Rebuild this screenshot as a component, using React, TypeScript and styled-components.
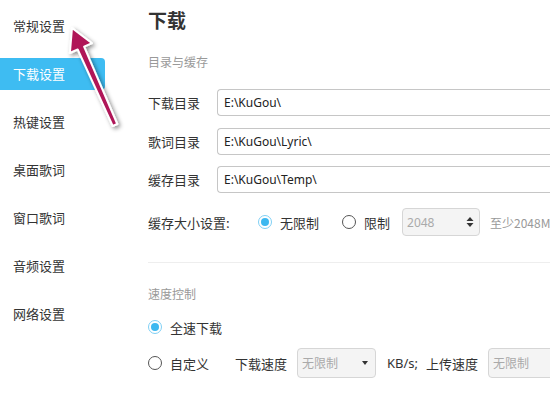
import React from 'react';
import styled, {createGlobalStyle} from 'styled-components';

const GlobalStyle = createGlobalStyle`
  html, body {
    margin: 0;
    padding: 0;
    background: #fff;
  }
  body {
    font-family: "Noto Sans CJK SC", "Noto Sans", sans-serif;
    color: #333;
  }
`;

const menu = ['常规设置', '下载设置', '热键设置', '桌面歌词', '窗口歌词', '音频设置', '网络设置'];

const dirs = [
  ['下载目录', 'E:\\KuGou\\'],
  ['歌词目录', 'E:\\KuGou\\Lyric\\'],
  ['缓存目录', 'E:\\KuGou\\Temp\\'],
];

export default function App() {
  return (
    <Page>
      <GlobalStyle />
      <Sidebar>
        {menu.map((m, i) => (
          <MenuItem key={m} active={i === 1}>
            {m}
          </MenuItem>
        ))}
      </Sidebar>
      <Main>
        <Title>下载</Title>
        <Section>目录与缓存</Section>
        <DirList>
          {dirs.map(([label, path]) => (
            <DirRow key={label}>
              <DirLabel>{label}</DirLabel>
              <PathInput>{path}</PathInput>
            </DirRow>
          ))}
        </DirList>
        <CacheRow>
          <CacheLabel>缓存大小设置:</CacheLabel>
          <Radio checked />
          <OptText>无限制</OptText>
          <Radio style={{marginLeft: 23}} />
          <OptText>限制</OptText>
          <SpinBox>
            2048
            <SpinArrows>
              <svg width="8" height="12" viewBox="0 0 8 12">
                <path d="M4 1 L7.5 5 L0.5 5 Z" fill="#333" />
                <path d="M4 11 L7.5 7 L0.5 7 Z" fill="#333" />
              </svg>
            </SpinArrows>
          </SpinBox>
          <Hint>至少2048M</Hint>
        </CacheRow>
        <Divider />
        <Section2>速度控制</Section2>
        <RadioRow>
          <Radio checked />
          <OptText>全速下载</OptText>
        </RadioRow>
        <SpeedRow>
          <Radio />
          <OptText>自定义</OptText>
          <SpeedLabel>下载速度</SpeedLabel>
          <SelectBox>
            无限制
            <Caret />
          </SelectBox>
          <Unit>KB/s;</Unit>
          <SpeedLabel2>上传速度</SpeedLabel2>
          <SelectBox>无限制</SelectBox>
        </SpeedRow>
      </Main>
      <Arrow width="140" height="140" viewBox="0 0 140 140">
        <defs>
          <filter id="sh" x="-30%" y="-30%" width="160%" height="160%">
            <feDropShadow dx="2" dy="2" stdDeviation="2" floodColor="#000" floodOpacity="0.45" />
          </filter>
        </defs>
        <polygon
          points="72,28 92,43.2 84.1,46.7 117.3,124 112.7,126 77.7,49.5 69.9,53"
          fill="#b01858"
          stroke="#fff"
          strokeWidth="2"
          strokeLinejoin="round"
          filter="url(#sh)"
        />
      </Arrow>
    </Page>
  );
}

const Page = styled.div`
  position: relative;
  width: 550px;
  height: 400px;
  overflow: hidden;
  display: flex;
`;

const Sidebar = styled.div`
  width: 105px;
  flex: 0 0 105px;
  padding-top: 10px;
  display: flex;
  flex-direction: column;
  gap: 16px;
`;

const MenuItem = styled.div<{active?: boolean}>`
  height: 32px;
  line-height: 32px;
  padding-left: 13px;
  font-size: 13px;
  color: ${p => (p.active ? '#fff' : '#333')};
  background: ${p => (p.active ? '#3ebcf2' : 'transparent')};
  border-radius: 0 4px 4px 0;
`;

const Main = styled.div`
  flex: 1;
  padding: 6px 0 0 43px;
  display: flex;
  flex-direction: column;
  white-space: nowrap;
`;

const Title = styled.div`
  height: 28px;
  line-height: 28px;
  font-size: 19px;
  font-weight: 700;
  color: #333;
`;

const Section = styled.div`
  margin-top: 18px;
  height: 20px;
  line-height: 20px;
  font-size: 12px;
  color: #999;
`;

const Section2 = styled(Section)`
  margin-top: 21px;
`;

const DirList = styled.div`
  margin-top: 17px;
  display: flex;
  flex-direction: column;
  gap: 11.5px;
`;

const DirRow = styled.div`
  display: flex;
  align-items: center;
  height: 27px;
`;

const DirLabel = styled.div`
  width: 69px;
  font-size: 13px;
  color: #333;
`;

const PathInput = styled.div`
  flex: 1;
  height: 27px;
  box-sizing: border-box;
  border: 1px solid #c6c6c6;
  border-right: none;
  border-radius: 4px 0 0 4px;
  padding-left: 6px;
  line-height: 25px;
  font-size: 12px;
  color: #222;
  font-family: "Noto Sans", sans-serif;
`;

const CacheRow = styled.div`
  margin-top: 15px;
  display: flex;
  align-items: center;
  height: 28px;
`;

const CacheLabel = styled.div`
  width: 110px;
  font-size: 13px;
  color: #333;
`;

const Radio = styled.span<{checked?: boolean}>`
  position: relative;
  box-sizing: border-box;
  width: 14px;
  height: 14px;
  flex: 0 0 14px;
  border-radius: 50%;
  border: 1px solid ${p => (p.checked ? '#7fd0f5' : '#555')};
  background: #fff;
  &::after {
    content: '';
    display: ${p => (p.checked ? 'block' : 'none')};
    position: absolute;
    left: 2px;
    top: 2px;
    width: 8px;
    height: 8px;
    border-radius: 50%;
    background: #3db8f0;
  }
`;

const OptText = styled.span`
  margin-left: 8px;
  font-size: 13px;
  color: #333;
`;

const SpinBox = styled.div`
  margin-left: 12px;
  width: 78px;
  height: 28px;
  box-sizing: border-box;
  border: 1px solid #d6d6d6;
  border-radius: 4px;
  background: #f4f4f4;
  display: flex;
  align-items: center;
  justify-content: space-between;
  padding: 0 5px 0 4px;
  font-size: 12px;
  color: #aaa;
  font-family: "Noto Sans", sans-serif;
`;

const SpinArrows = styled.span`
  display: flex;
  align-items: center;
`;

const Hint = styled.span`
  margin-left: 10px;
  font-size: 12px;
  color: #999;
`;

const Divider = styled.div`
  margin-top: 26px;
  height: 1px;
  background: #eeeeee;
`;

const RadioRow = styled.div`
  margin-top: 13px;
  display: flex;
  align-items: center;
  height: 20px;
`;

const SpeedRow = styled.div`
  margin-top: 11px;
  display: flex;
  align-items: center;
  height: 30px;
`;

const SpeedLabel = styled.span`
  margin-left: 26px;
  font-size: 13px;
  color: #333;
`;

const SpeedLabel2 = styled.span`
  margin-left: 8px;
  font-size: 13px;
  color: #333;
`;

const SelectBox = styled.div`
  position: relative;
  margin-left: 10px;
  width: 79px;
  flex: 0 0 79px;
  height: 30px;
  box-sizing: border-box;
  border: 1px solid #d6d6d6;
  border-radius: 4px;
  background: #f4f4f4;
  padding-left: 4px;
  line-height: 28px;
  font-size: 12px;
  color: #aaa;
`;

const Caret = styled.span`
  position: absolute;
  right: 7px;
  top: 12px;
  width: 0;
  height: 0;
  border-left: 3.5px solid transparent;
  border-right: 3.5px solid transparent;
  border-top: 4px solid #333;
`;

const Unit = styled.span`
  margin-left: 11px;
  font-size: 13px;
  color: #333;
  font-family: "Noto Sans", sans-serif;
`;

const Arrow = styled.svg`
  position: absolute;
  left: 0;
  top: 0;
  pointer-events: none;
`;
